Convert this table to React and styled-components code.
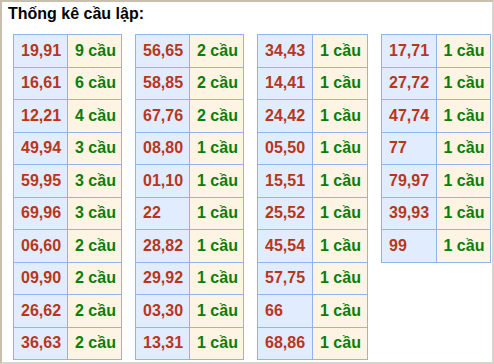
import React from "react";
import styled, { createGlobalStyle } from "styled-components";

const columns = [
	[
		["19,91", 9], ["16,61", 6], ["12,21", 4], ["49,94", 3], ["59,95", 3],
		["69,96", 3], ["06,60", 2], ["09,90", 2], ["26,62", 2], ["36,63", 2],
	],
	[
		["56,65", 2], ["58,85", 2], ["67,76", 2], ["08,80", 1], ["01,10", 1],
		["22", 1], ["28,82", 1], ["29,92", 1], ["03,30", 1], ["13,31", 1],
	],
	[
		["34,43", 1], ["14,41", 1], ["24,42", 1], ["05,50", 1], ["15,51", 1],
		["25,52", 1], ["45,54", 1], ["57,75", 1], ["66", 1], ["68,86", 1],
	],
	[
		["17,71", 1], ["27,72", 1], ["47,74", 1], ["77", 1], ["79,97", 1],
		["39,93", 1], ["99", 1],
	],
];

const GlobalStyle = createGlobalStyle`
	html, body {
		margin: 0;
		padding: 0;
		background: #fff;
	}
	body {
		font-family: "Liberation Sans", Arial, sans-serif;
	}
`;

const Frame = styled.div`
	box-sizing: border-box;
	width: 494px;
	height: 364px;
	border: 2px solid #d9d5cd;
	border-left-color: #c9bfae;
	border-top-color: #c9bfae;
	background: #fff;
	padding: 3px 0 0 6px;
`;

const Title = styled.div`
	font-size: 16px;
	font-weight: bold;
	line-height: 18px;
	color: #000;
`;

const Tables = styled.div`
	display: flex;
	align-items: flex-start;
	gap: 13px;
	margin-top: 11px;
	padding-left: 5px;
`;

const Table = styled.table`
	border-collapse: collapse;
	table-layout: fixed;
	width: ${(p) => p.$width}px;
`;

const Cell = styled.td`
	border: 1px solid #93b3ee;
	height: 32.5px;
	padding: 0 0 0 7px;
	box-sizing: border-box;
	font-size: 16px;
	font-weight: bold;
	line-height: 18px;
	white-space: nowrap;
	background: ${(p) => (p.$count ? "#fdf4e3" : "#e1edfe")};
	color: ${(p) => (p.$count ? "#0a7d0a" : "#b8361c")};
`;

const widths = [109, 109, 111, 110];

export default function App() {
	return (
		<>
			<GlobalStyle />
			<Frame>
				<Title>Thống kê cầu lập:</Title>
				<Tables>
					{columns.map((rows, i) => (
						<Table key={i} $width={widths[i]}>
							<colgroup>
								<col style={{ width: "50%" }} />
								<col style={{ width: "50%" }} />
							</colgroup>
							<tbody>
								{rows.map(([pair, n]) => (
									<tr key={pair}>
										<Cell>{pair}</Cell>
										<Cell $count>{n} cầu</Cell>
									</tr>
								))}
							</tbody>
						</Table>
					))}
				</Tables>
			</Frame>
		</>
	);
}
